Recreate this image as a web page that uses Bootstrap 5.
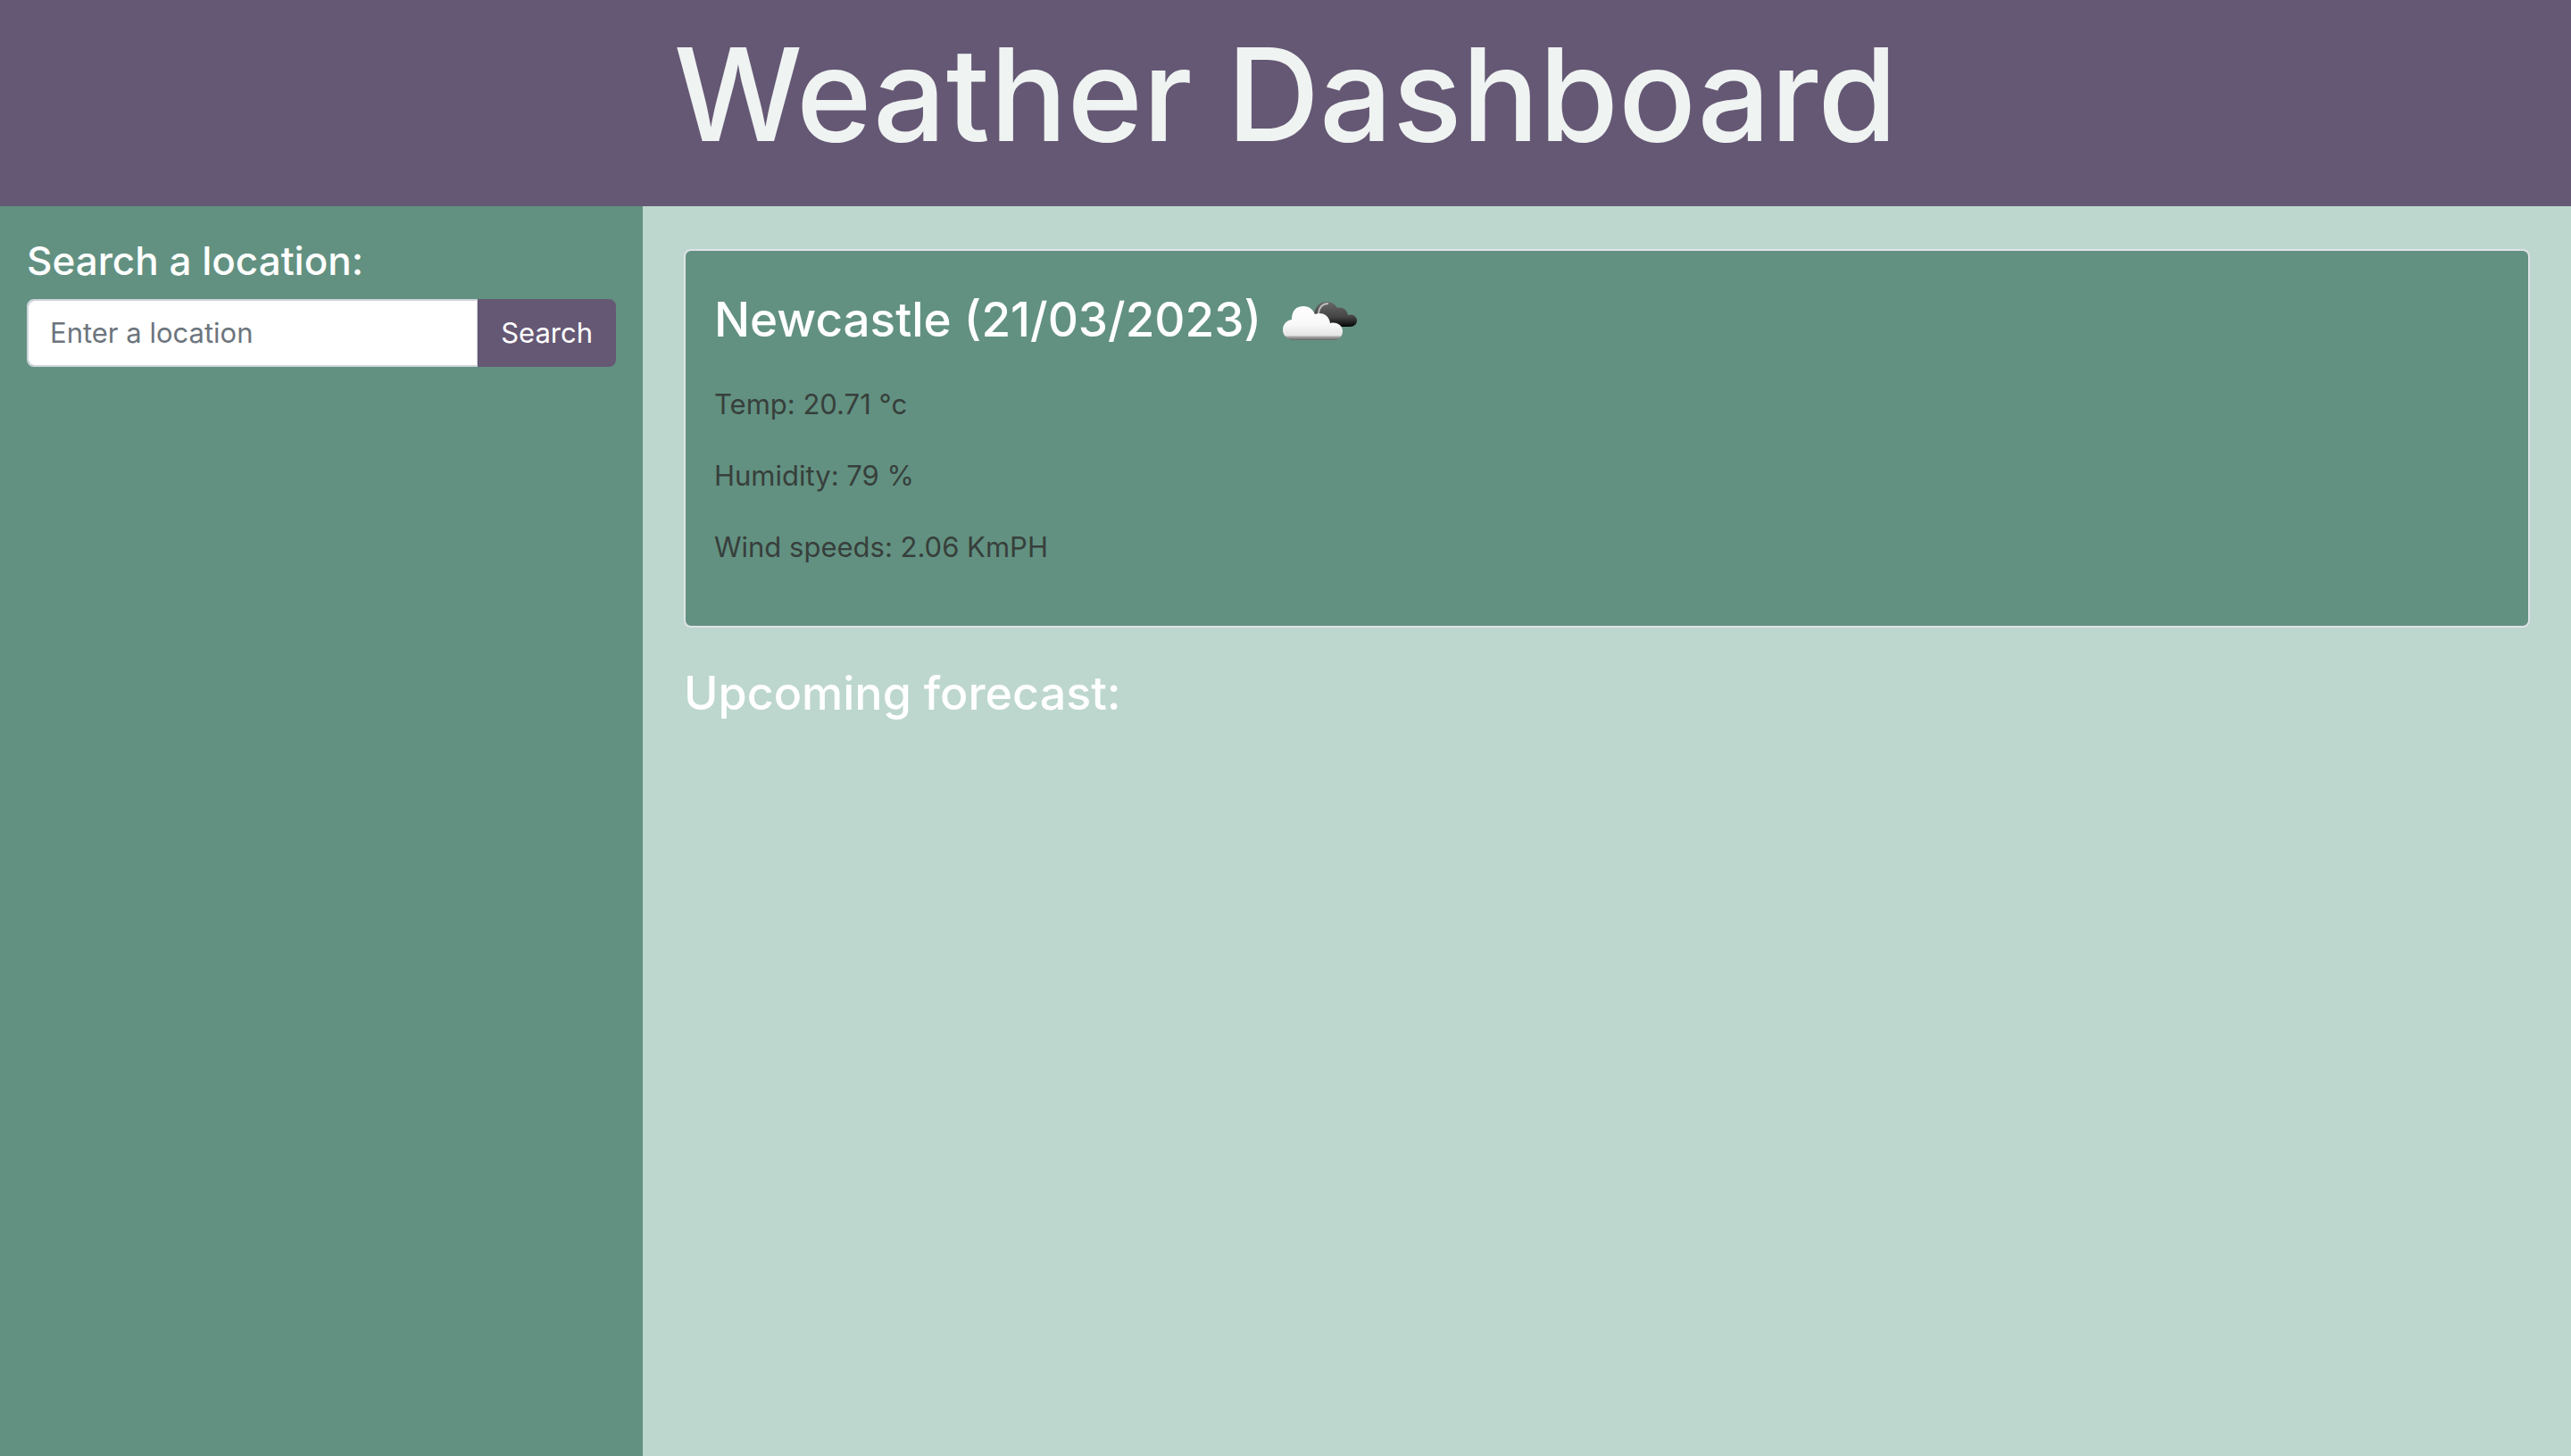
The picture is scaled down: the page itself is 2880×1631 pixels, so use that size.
<!DOCTYPE html>
<html lang="en">
<head>
<meta charset="utf-8">
<meta name="viewport" content="width=device-width, initial-scale=1">
<title>Weather Dashboard</title>
<link rel="stylesheet" href="https://cdn.jsdelivr.net/npm/bootstrap@5.3.0/dist/css/bootstrap.min.css">
<style>
  :root { font-size: 32px; }
  body { font-family: Inter, "Liberation Sans", sans-serif; font-size: 31px; line-height: 48px; background: #bdd7ce; }
  .site-header { background: #655874; color: #eff3f2; padding: 16px 16px 35px; }
  .site-title { font-size: 144px; line-height: 180px; }
  .sidebar { background: #629181; padding: 32px 30px; }
  .sidebar-title { font-size: 44px; line-height: 58px; margin-bottom: 14px; }
  .section-title { font-size: 52px; line-height: 68px; }
  .input-group > .form-control, .input-group > .btn { font-size: 31px; line-height: 48px; padding: 12px 24px; border-width: 2px; border-radius: 8px; }
  .input-group > .form-control { border-color: #ced4da; color: #212529; border-top-right-radius: 0; border-bottom-right-radius: 0; }
  .input-group > .btn.btn-search { border-radius: 8px; margin-left: 0; }
  .form-control::placeholder { color: #6c757d; }
  .btn-search, .btn-search:hover { background: #655874; border-color: #655874; color: #fff; }
  .forecast-area { padding: 48px 46px; }
  .weather-card { background: #629181; border: 2px solid #dee2e6; border-radius: 8px; margin-bottom: 40px; }
  .weather-card .card-body { padding: 32px; }
  .weather-heading { font-size: 53px; line-height: 68px; margin-bottom: 16px; }
  .weather-icon { width: 100px; height: 100px; vertical-align: middle; }
  .weather-card p { color: #373f3b; margin-bottom: 32px; }
</style>
<script defer src="https://cdn.jsdelivr.net/npm/bootstrap@5.3.0/dist/js/bootstrap.bundle.min.js"></script>
</head>
<body class="min-vh-100 d-flex flex-column">
<header class="site-header text-center">
  <h1 class="site-title fw-medium mb-0">Weather Dashboard</h1>
</header>
<div class="row g-0 flex-grow-1">
  <aside class="col-3 sidebar">
    <form>
      <h2 class="sidebar-title fw-medium text-white"><label for="location">Search a location:</label></h2>
      <div class="input-group">
        <input type="text" class="form-control" id="location" placeholder="Enter a location">
        <button type="button" class="btn btn-search">Search</button>
      </div>
    </form>
  </aside>
  <main class="col-9 forecast-area">
    <section class="card weather-card">
      <div class="card-body">
        <h2 class="weather-heading fw-medium text-white">Newcastle (21/03/2023)
          <svg class="weather-icon" viewBox="0 0 100 100" role="img" aria-label="Broken clouds">
            <defs>
              <linearGradient id="pale" x1="0" y1="30" x2="0" y2="68" gradientUnits="userSpaceOnUse">
                <stop offset="0" stop-color="#fff"/><stop offset=".55" stop-color="#f8f8f8"/><stop offset=".86" stop-color="#e4e4e4"/><stop offset=".9" stop-color="#aaa"/><stop offset="1" stop-color="#666"/>
              </linearGradient>
              <linearGradient id="dark" x1="0" y1="26" x2="0" y2="53" gradientUnits="userSpaceOnUse">
                <stop offset="0" stop-color="#666"/><stop offset=".6" stop-color="#444"/><stop offset="1" stop-color="#050505"/>
              </linearGradient>
            </defs>
            <path fill="url(#dark)" d="M45 53C42 35 49 25 59 25C65 25 69 28 71 32C77 30 82 34 83 40C89 38 93 42 93 46C93 50 90 53 85 53Z"/>
            <path d="M50 38C51 30 55 27 61 27" fill="none" stroke="#bbb" stroke-width="2"/>
            <path fill="url(#pale)" d="M20 68C14 66 10 62 10 57C10 50 14 46 20 45C20 35 25 30 33 30C40 30 44 34 46 39C55 36 62 41 63 49C71 47 77 52 77 58C77 63 74 67 69 68Z"/>
          </svg>
        </h2>
        <p>Temp: 20.71 °c</p>
        <p>Humidity: 79 %</p>
        <p>Wind speeds: 2.06 KmPH</p>
      </div>
    </section>
    <h2 class="section-title fw-medium text-white">Upcoming forecast:</h2>
  </main>
</div>
</body>
</html>
